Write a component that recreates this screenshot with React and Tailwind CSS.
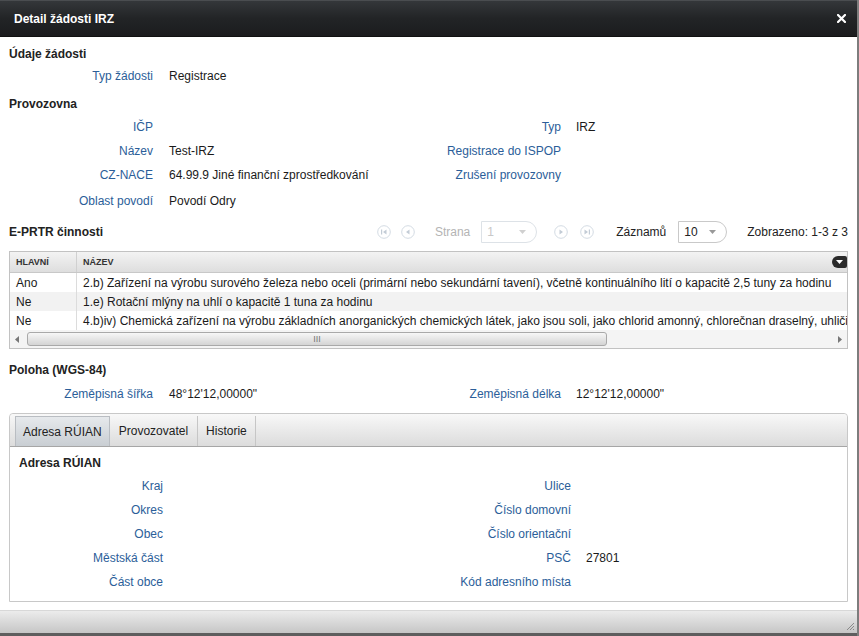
import React from "react";

const lbl = "text-right text-[#2b5e99] whitespace-nowrap";

const FormRow = ({ label, value, label2, value2, extra = "" }) => (
  <div className={`grid grid-cols-[153px_255px_153px_1fr] h-[24px] items-center ${extra}`}>
    <div className={lbl}>{label}</div>
    <div className="pl-[16px] text-[#1a1a1a] whitespace-nowrap">{value}</div>
    <div className={lbl}>{label2}</div>
    <div className="pl-[15px] text-[#1a1a1a] whitespace-nowrap">{value2}</div>
  </div>
);

const Heading = ({ children, className = "" }) => (
  <div className={`h-[20px] flex items-center font-bold text-[#222] ${className}`}>{children}</div>
);

// small round pager button
const PagerBtn = ({ kind }) => (
  <svg width="14" height="14" viewBox="0 0 14 14">
    <circle cx="7" cy="7" r="6.3" fill="#fff" stroke="#d3dbe3" strokeWidth="1" />
    {kind === "first" && (
      <g fill="#c3ccd6">
        <rect x="4" y="4.5" width="1.2" height="5" />
        <polygon points="9.5,4.5 9.5,9.5 6,7" />
      </g>
    )}
    {kind === "prev" && <polygon points="8.5,4.5 8.5,9.5 5,7" fill="#c3ccd6" />}
    {kind === "next" && <polygon points="5.5,4.5 5.5,9.5 9,7" fill="#c3ccd6" />}
    {kind === "last" && (
      <g fill="#c3ccd6">
        <polygon points="4.5,4.5 4.5,9.5 8,7" />
        <rect x="8.8" y="4.5" width="1.2" height="5" />
      </g>
    )}
  </svg>
);

const SelectBox = ({ value, disabled, width }) => (
  <div
    className={`h-[22px] ${width} border ${disabled ? "border-[#dde2e7] text-[#c8c8c8]" : "border-[#c9c9c9] text-[#222]"} rounded-r-[11px] flex items-center pl-[5px] pr-[10px] justify-between bg-white`}
  >
    <span>{value}</span>
    <svg width="7" height="4" viewBox="0 0 7 4">
      <polygon points="0,0 7,0 3.5,4" fill={disabled ? "#d0d0d0" : "#999"} />
    </svg>
  </div>
);

const rows = [
  {
    main: "Ano",
    name: "2.b) Zařízení na výrobu surového železa nebo oceli (primární nebo sekundární tavení), včetně kontinuálního lití o kapacitě 2,5 tuny za hodinu",
    bg: "bg-white",
  },
  { main: "Ne", name: "1.e) Rotační mlýny na uhlí o kapacitě 1 tuna za hodinu", bg: "bg-[#f2f2f2]" },
  {
    main: "Ne",
    name: "4.b)iv) Chemická zařízení na výrobu základních anorganických chemických látek, jako jsou soli, jako chlorid amonný, chlorečnan draselný, uhličitan",
    bg: "bg-white",
  },
];

export default function App() {
  return (
    <div className="w-[859px] h-[636px] bg-white flex flex-col overflow-hidden border-r-2 border-[#7d7d7d] font-['Liberation_Sans',Arial,Helvetica,sans-serif] text-[12px] leading-none">
      {/* title bar */}
      <div className="h-[37px] shrink-0 bg-gradient-to-b from-[#34373a] via-[#222426] to-[#1b1c1e] border-t border-[#4a4d50] border-b border-b-[#111] flex items-center pl-[14px] pr-[11px]">
        <span className="text-white font-bold text-[12px]">Detail žádosti IRZ</span>
        <svg className="ml-auto" width="9" height="9" viewBox="0 0 9 9">
          <path d="M1 1 L8 8 M8 1 L1 8" stroke="#fff" strokeWidth="2.2" strokeLinecap="square" />
        </svg>
      </div>

      {/* body */}
      <div className="flex-1 flex flex-col">
        <Heading className="pl-[9px] mt-[7px]">Údaje žádosti</Heading>
        <FormRow label="Typ žádosti" value="Registrace" extra="h-[22px]" />

        <Heading className="pl-[9px] mt-[6px]">Provozovna</Heading>
        <FormRow label="IČP" value="" label2="Typ" value2="IRZ" extra="mt-[1px]" />
        <FormRow label="Název" value="Test-IRZ" label2="Registrace do ISPOP" />
        <FormRow label="CZ-NACE" value="64.99.9 Jiné finanční zprostředkování" label2="Zrušení provozovny" />
        <FormRow label="Oblast povodí" value="Povodí Odry" extra="mt-[2px]" />

        {/* E-PRTR header + pager */}
        <div className="h-[22px] mt-[8px] flex items-center pl-[9px] pr-[9px]">
          <span className="font-bold text-[#222]">E-PRTR činnosti</span>
          <div className="ml-auto flex items-center">
            <PagerBtn kind="first" />
            <span className="ml-[10px]"><PagerBtn kind="prev" /></span>
            <span className="ml-[20px] text-[#b4b4b4]">Strana</span>
            <span className="ml-[11px]"><SelectBox value="1" disabled width="w-[56px]" /></span>
            <span className="ml-[17px]"><PagerBtn kind="next" /></span>
            <span className="ml-[12px]"><PagerBtn kind="last" /></span>
            <span className="ml-[22px] text-[#222]">Záznamů</span>
            <span className="ml-[12px]"><SelectBox value="10" width="w-[49px]" /></span>
            <span className="ml-[20px] text-[#222]">Zobrazeno: 1-3 z 3</span>
          </div>
        </div>

        {/* grid */}
        <div className="mx-[9px] mt-[8px] border border-[#c2c2c2] overflow-hidden">
          <div className="h-[21px] flex items-center bg-gradient-to-b from-[#f3f3f3] to-[#dedede] border-b border-[#c8c8c8] relative">
            <div className="w-[67px] h-full flex items-center pl-[6px] border-r border-[#d0d0d0] text-[9px] font-bold text-[#333]">HLAVNÍ</div>
            <div className="pl-[6px] text-[9px] font-bold text-[#333]">NÁZEV</div>
            <div className="absolute right-0 top-[4px] w-[15px] h-[12px] rounded-l-[6px] rounded-r-[2px] bg-[#2b2b2b] flex items-center justify-center">
              <svg width="7" height="4" viewBox="0 0 7 4">
                <polygon points="0,0 7,0 3.5,4" fill="#fff" />
              </svg>
            </div>
          </div>
          {rows.map((r, i) => (
            <div key={i} className={`h-[19px] flex items-center ${r.bg} whitespace-nowrap text-[#1a1a1a]`}>
              <div className="w-[67px] shrink-0 h-full flex items-center pl-[6px] border-r border-[#dcdcdc]">{r.main}</div>
              <div className="pl-[6px]">{r.name}</div>
            </div>
          ))}
          {/* horizontal scrollbar */}
          <div className="h-[18px] bg-[#f4f4f4] flex items-center px-[5px]">
            <svg width="4" height="7" viewBox="0 0 4 7">
              <polygon points="4,0 4,7 0,3.5" fill="#777" />
            </svg>
            <div className="ml-[8px] w-[580px] h-[14px] rounded-[3px] border border-[#a9a9a9] bg-gradient-to-b from-[#f7f7f7] to-[#d4d4d4] flex items-center justify-center text-[9px] text-[#777]">
              III
            </div>
            <svg className="ml-auto" width="4" height="7" viewBox="0 0 4 7">
              <polygon points="0,0 0,7 4,3.5" fill="#777" />
            </svg>
          </div>
        </div>

        <Heading className="pl-[9px] mt-[11px]">Poloha (WGS-84)</Heading>
        <FormRow label="Zeměpisná šířka" value={"48°12'12,00000\""} label2="Zeměpisná délka" value2={"12°12'12,00000\""} extra="h-[22px] mt-[2px]" />

        {/* tab panel */}
        <div className="mx-[9px] mt-[7px] h-[189px] border border-[#c8c8c8] rounded-t-[4px] flex flex-col">
          <div className="h-[33px] shrink-0 bg-gradient-to-b from-[#f8f8f8] to-[#dcdcdc] border-b border-[#a6a6a6] rounded-t-[4px] flex items-end pl-[5px]">
            <div className="h-[30px] px-[7px] flex items-center border border-b-0 border-[#b9bdc2] bg-gradient-to-b from-[#e6e9ec] to-[#c9ced3] text-[#222]">Adresa RÚIAN</div>
            <div className="h-[30px] px-[9px] flex items-center border-r border-[#c6c6c6] text-[#222]">Provozovatel</div>
            <div className="h-[30px] px-[8px] flex items-center border-r border-[#c6c6c6] text-[#222]">Historie</div>
          </div>
          <Heading className="pl-[9px] mt-[6px]">Adresa RÚIAN</Heading>
          <FormRow label="Kraj" label2="Ulice" extra="mt-[1px]" />
          <FormRow label="Okres" label2="Číslo domovní" />
          <FormRow label="Obec" label2="Číslo orientační" />
          <FormRow label="Městská část" label2="PSČ" value2="27801" />
          <FormRow label="Část obce" label2="Kód adresního místa" />
        </div>

        {/* footer */}
        <div className="mt-auto h-[26px] shrink-0 flex flex-col">
          <div className="h-[23px] bg-gradient-to-b from-[#ececec] to-[#c6c6c6] border-t border-[#d8d8d8] flex items-end justify-end pr-[2px] pb-[2px]">
            <svg width="10" height="10" viewBox="0 0 10 10">
              <path d="M9 2 L2 9 M9 5 L5 9 M9 8 L8 9" stroke="#8a8a8a" strokeWidth="1" />
            </svg>
          </div>
          <div className="h-[3px] bg-[#5e5e5e]" />
        </div>
      </div>
    </div>
  );
}
